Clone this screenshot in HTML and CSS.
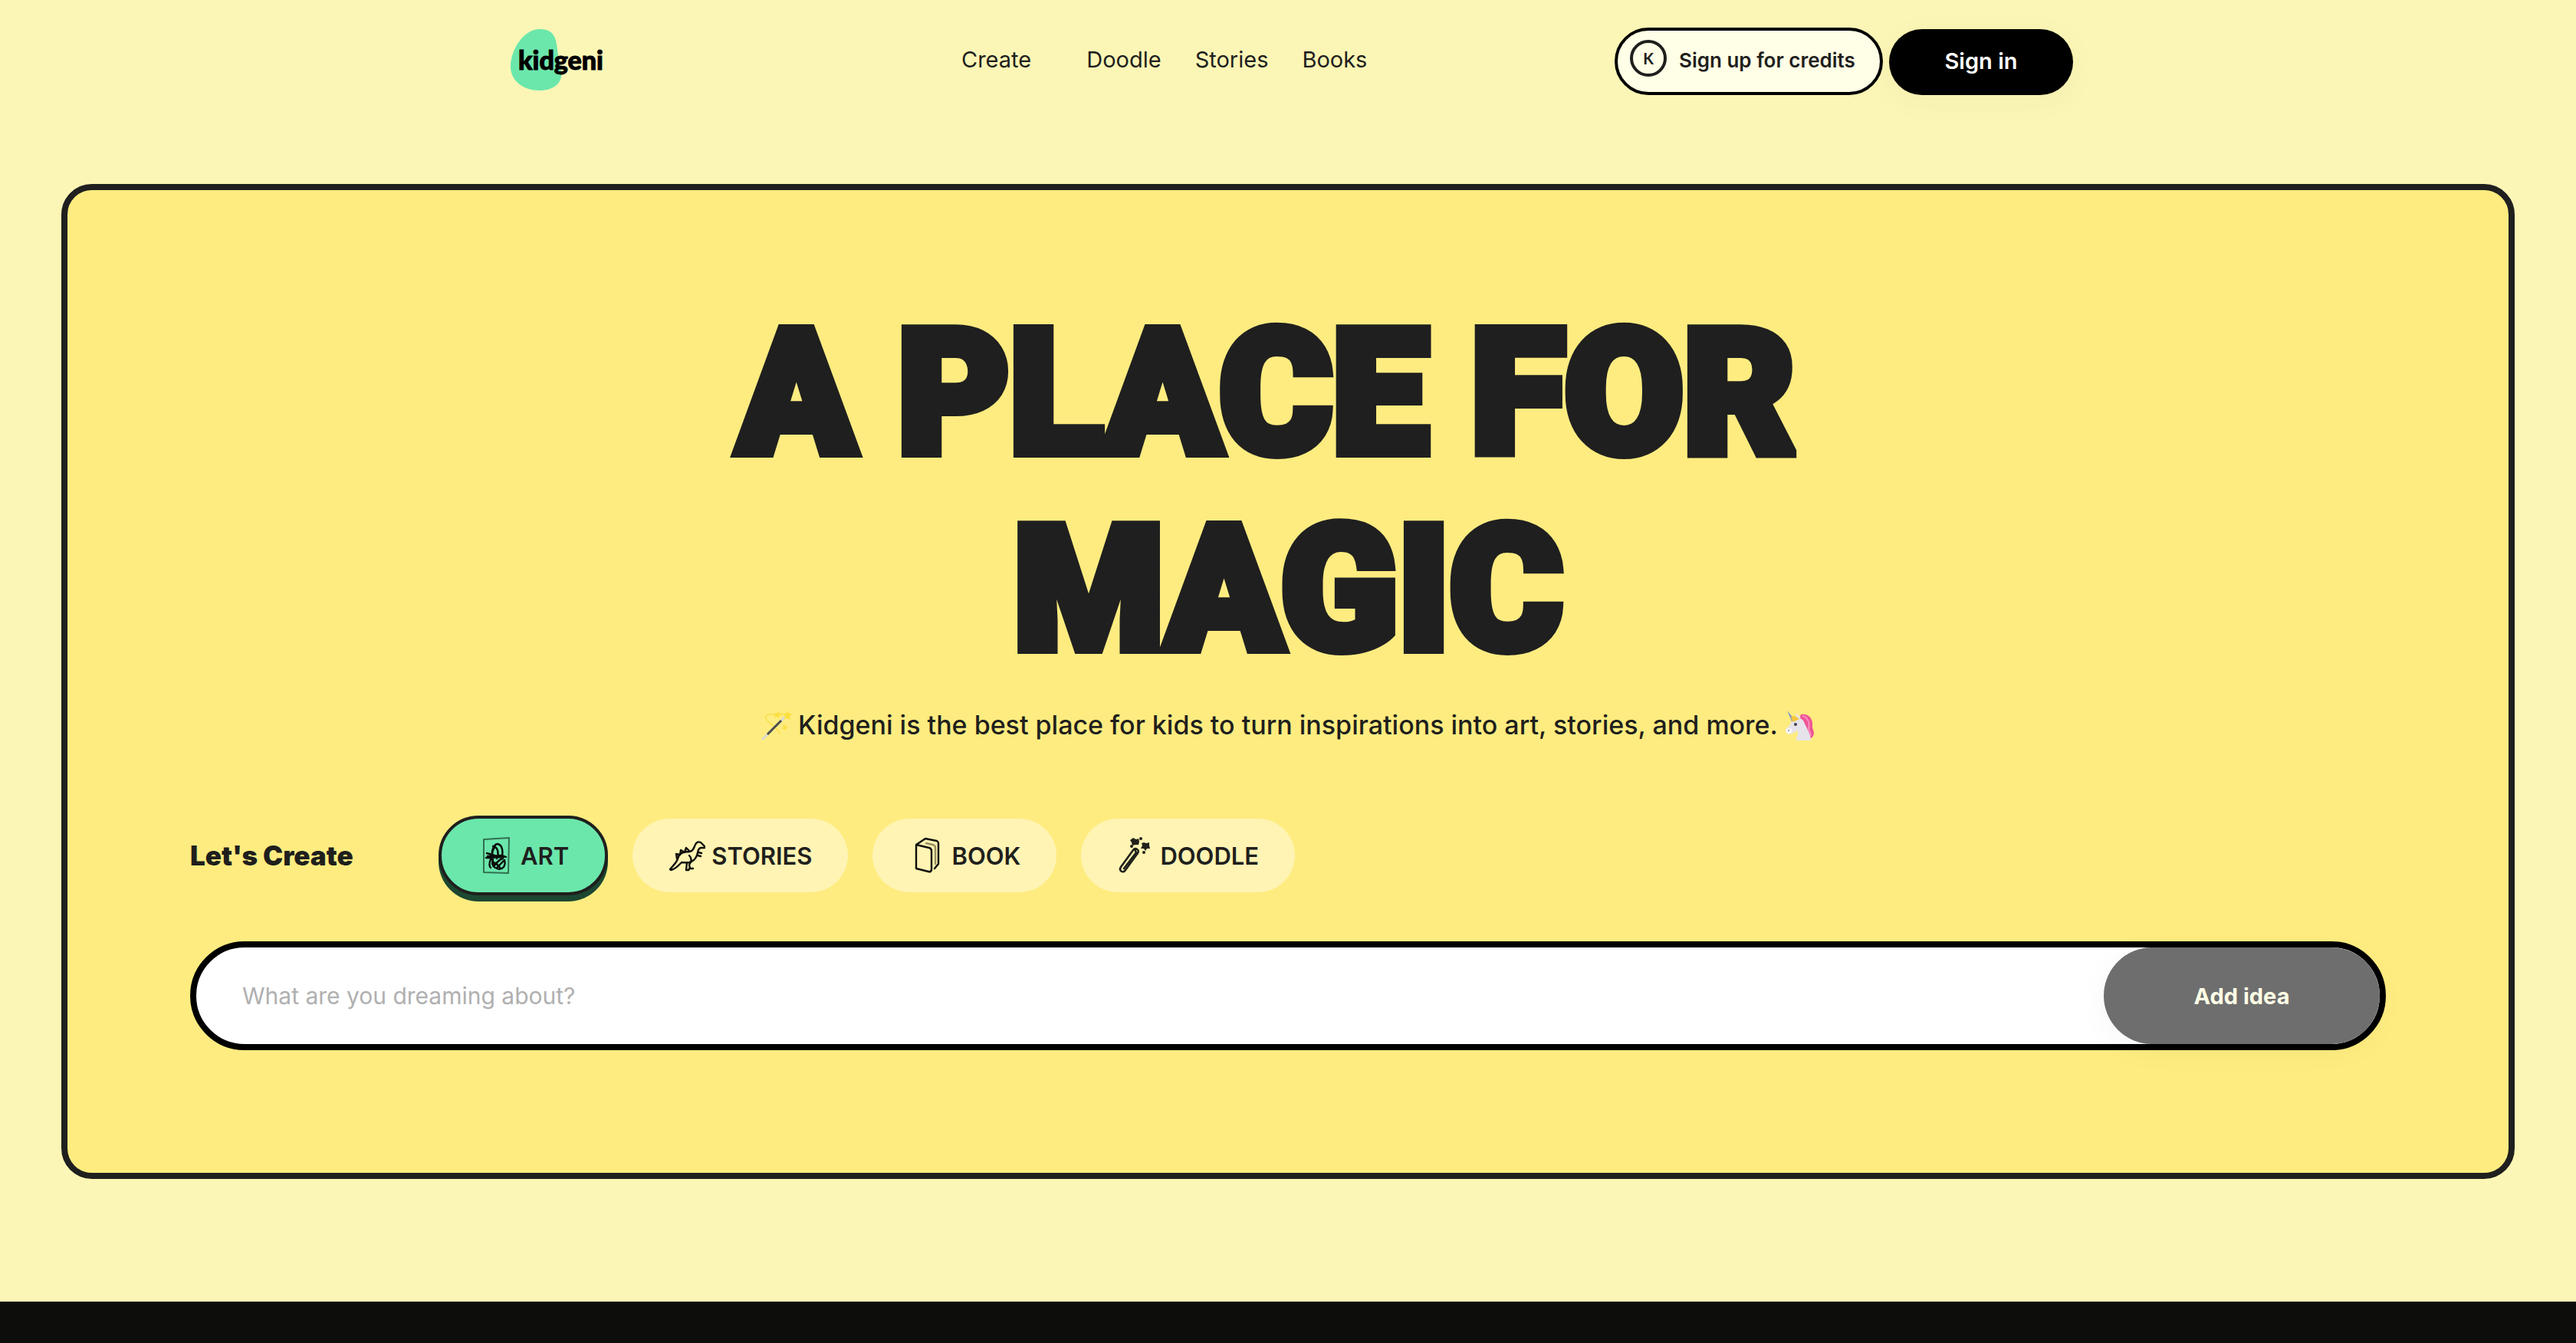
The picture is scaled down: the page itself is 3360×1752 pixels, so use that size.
FILE: index.html
```html
<!DOCTYPE html>
<html lang="en">
<head>
  <meta charset="utf-8" />
  <title>Kidgeni</title>
  <link rel="stylesheet" href="styles.css">
</head>
<body>
  <header class="site-header">
    <a class="logo" href="#">
      <svg class="logo-blob" viewBox="0 0 66 80" aria-hidden="true">
        <path d="M38 0C54 0 59 8 61 26C62 40 67 52 66 62C64 74 52 80 38 80C16 80 0 67 0 49C0 28 16 0 38 0Z" fill="#6be7ac"/>
      </svg>
      <span class="logo-text">kidgeni</span>
    </a>

    <nav class="site-nav">
      <a class="wide" href="#">Create</a>
      <a href="#">Doodle</a>
      <a href="#">Stories</a>
      <a href="#">Books</a>
    </nav>

    <div class="account">
      <button class="btn-credits" type="button">
        <span class="coin">K</span>
        Sign up for credits
      </button>
      <button class="btn-signin" type="button">Sign in</button>
    </div>
  </header>

  <main>
    <section class="hero">
      <h1>A PLACE FOR&nbsp;<br>MAGIC</h1>
      <p class="tagline">
        <svg class="emoji" viewBox="0 0 40 40" aria-hidden="true">
          <path d="M17 6C9 5 4 7 6 11C9 18 20 21 25 32M23 5L34 6" fill="none" stroke="#fbdc3c" stroke-width="1.5" opacity=".8"/>
          <path d="M2 38L30 10" stroke="#d9d8d0" stroke-width="3" stroke-linecap="round"/>
          <path d="M8 32L26 14" stroke="#4c4d49" stroke-width="3"/>
          <path d="M34 1L36 5L40 5L37 9L38 13L34 11L30 12L31 8L28 5L32 5Z" fill="#fbdf3d"/>
          <path d="M22 2L23 5L26 6L23 8L23 11L20 9L17 10L18 7L16 4L20 5Z" fill="#fbdf3d"/>
          <path d="M31 20L32 22L35 23L32 24L32 27L30 25L27 25L29 23L28 20Z" fill="#fbdf3d"/>
        </svg>
        Kidgeni is the best place for kids to turn inspirations into art, stories, and more.
        <svg class="emoji" viewBox="0 0 40 40" aria-hidden="true">
          <path d="M22 6C32 4 38 12 37 20C36 26 41 28 38 34C36 38 30 39 27 37C32 30 27 22 20 12Z" fill="#ef5595"/>
          <path d="M24 8C31 10 34 17 32 24C32 28 36 30 34 35" fill="none" stroke="#f98fc0" stroke-width="2"/>
          <path d="M12 14C17 9 25 10 27 18C30 25 34 30 35 40H16C16 34 20 31 17 27C14 29 10 33 5 31C1 29 2 25 5 23C8 20 8 17 12 14Z" fill="#e6e3ea"/>
          <path d="M5 23C2 25 1 29 5 31C9 32 11 29 11 26Z" fill="#f8f6fa"/>
          <path d="M4 1L14 13L10 15Z" fill="#8198c5"/>
          <path d="M15 12L16 4L22 11Z" fill="#e6e3ea"/>
          <path d="M9 10C12 6 15 8 20 12L12 16Z" fill="#f7c63f"/>
          <circle cx="15" cy="19" r="2" fill="#40414b"/>
          <circle cx="6" cy="27" r="1" fill="#8a8790"/>
        </svg>
      </p>

      <div class="create-row">
        <h2>Let's Create</h2>
        <div class="tabs">
          <button class="tab active" type="button">
            <svg viewBox="0 0 48 48" fill="none" stroke="#0b0d0b" stroke-linecap="round" stroke-linejoin="round" aria-hidden="true">
              <path d="M8 3L41 1L40 47L8 46Z" stroke="#31704f" stroke-width="2"/>
              <path d="M19 25C18 16 22 9 26 9C32 10 33 18 32 26M20 12C27 13 28 22 25 28M23 11C18 19 17 28 22 36M12 21L22 24M11 27L34 26M13 25L30 24M17 29C15 34 15 38 17 40M20 29C18 35 19 38 23 40M25 41C33 44 37 37 35 30M22 37C25 33 29 29 33 28M25 40C28 37 31 34 34 31M32 24L37 26M20 33C24 33 27 37 30 41" stroke-width="2.4"/>
            </svg>
            ART
          </button>
          <button class="tab" type="button">
            <svg viewBox="0 0 48 48" fill="none" stroke="#0d0d0b" stroke-width="2.4" stroke-linecap="round" stroke-linejoin="round" aria-hidden="true">
              <path d="M47 12L42 7C38 5 35 8 34 12C32 18 29 20 23 19C17 20 13 23 12 28C11 33 6 37 2 42L3 43C9 42 13 37 17 33C21 33 25 34 27 33C31 32 34 30 36 26C39 22 37 15 42 14H47"/>
              <path d="M11 28L10 22L15 23L16 17L21 20L23 14L27 18M39 20L43 21M38 24L42 25M27 24C31 28 30 32 27 36L28 41H32M24 33L23 43H26L28 40"/>
            </svg>
            STORIES
          </button>
          <button class="tab" type="button">
            <svg viewBox="0 0 48 48" fill="none" stroke="#0d0d0b" stroke-width="2.4" stroke-linecap="round" stroke-linejoin="round" aria-hidden="true">
              <path d="M10 10L27 14Q30 15 30 18V43Q29 46 26 45L10 41ZM10 10L22 2L37 5Q39 6 39 8V35L34 41"/>
              <path d="M23 8L32 10Q35 11 35 14V35" stroke="#96905f"/>
            </svg>
            BOOK
          </button>
          <button class="tab" type="button">
            <svg viewBox="0 0 48 48" fill="none" stroke="#22221c" stroke-width="2.6" stroke-linecap="round" stroke-linejoin="round" aria-hidden="true">
              <path d="M5 39L21 17C24 13 30 17 27 21L11 43C8 48 2 44 5 39ZM9 41L25 20L23 16"/>
              <g fill="#22221c" stroke="none">
                <path d="M21 1L25 3L28 2L29 6L28 10L24 10L20 11L19 7L17 4Z"/>
                <path d="M35 7L38 8L42 7L42 11L43 15L39 15L37 18L35 15L31 15L33 11L32 8Z"/>
                <circle cx="31" cy="2" r="2"/>
                <circle cx="19" cy="12" r="2"/>
                <circle cx="35" cy="20" r="2"/>
              </g>
            </svg>
            DOODLE
          </button>
        </div>
      </div>

      <form class="idea-form">
        <input type="text" aria-label="Your idea" placeholder="What are you dreaming about?">
        <button type="button">Add idea</button>
      </form>
    </section>
  </main>

  <footer></footer>
</body>
</html>
```
FILE: styles.css
```css
* {
  box-sizing: border-box;
}

body {
  margin: 0;
  min-height: 100vh;
  display: flex;
  flex-direction: column;
  background: #fcf6b6;
  color: #1f1f1d;
  font-family: Inter, "Liberation Sans", sans-serif;
}

button {
  border: none;
  color: inherit;
  font-family: inherit;
  cursor: pointer;
}

/* Header */
.site-header {
  display: flex;
  justify-content: space-between;
  align-items: flex-start;
  width: 100%;
  max-width: 2048px;
  height: 160px;
  margin: 0 auto;
  padding-top: 36px;
}

.logo {
  position: relative;
  width: 272px;
  padding: 2px 0 0 10px;
  color: #000;
  text-decoration: none;
}

.logo-blob {
  display: block;
  width: 66px;
  height: 80px;
}

.logo-text {
  position: absolute;
  top: 20px;
  left: 20px;
  font: 900 34px/44px Lato, sans-serif;
  -webkit-text-stroke: 1px #000;
}

.site-nav {
  display: flex;
  gap: 44px;
  width: 526px;
}

.site-nav a {
  color: #1f1f1d;
  font-size: 29px;
  line-height: 84px;
  text-decoration: none;
}

.site-nav .wide {
  margin-right: 28px;
}

.account {
  display: flex;
  align-items: flex-end;
  gap: 8px;
}

.btn-credits {
  display: flex;
  align-items: center;
  width: 350px;
  height: 88px;
  padding: 0 16px 4px;
  gap: 16px;
  border: 4px solid #000;
  border-radius: 44px;
  background: #fffee6;
  font-size: 26px;
  font-weight: 600;
  white-space: nowrap;
}

.coin {
  width: 48px;
  height: 48px;
  margin-bottom: 4px;
  border: 4px solid #1f1f1d;
  border-radius: 50%;
  font: 700 20px/40px Lato, sans-serif;
  text-align: center;
}

.btn-signin {
  width: 240px;
  height: 86px;
  padding-bottom: 4px;
  border-radius: 43px;
  background: #000;
  color: #fff;
  font-size: 29px;
  font-weight: 600;
  box-shadow: 0 8px 40px rgba(0, 0, 0, 0.04);
}

/* Hero */
main {
  padding: 80px 80px 160px;
}

.hero {
  padding: 138px 160px 160px;
  border: 8px solid #1f1f1f;
  border-radius: 40px;
  background: #feec80;
}

h1 {
  margin: 0;
  color: #1f1f1f;
  font: 900 224px/256px Roboto, sans-serif;
  text-align: center;
  -webkit-text-stroke: 14px #1f1f1f;
}

.tagline {
  display: flex;
  justify-content: center;
  align-items: center;
  gap: 8px;
  margin: 24px 0 94px;
  font-size: 34px;
  font-weight: 500;
  line-height: 48px;
}

.emoji {
  width: 40px;
  height: 40px;
}

.create-row {
  display: flex;
  align-items: center;
}

h2 {
  width: 324px;
  margin: 0;
  font-size: 35px;
  font-weight: 900;
}

.tabs {
  display: flex;
  align-items: center;
  gap: 32px;
}

.tab {
  display: flex;
  align-items: center;
  gap: 8px;
  height: 96px;
  padding: 0 47px;
  border-radius: 52px;
  background: #fff4b3;
  font-size: 31px;
  font-weight: 600;
}

.tab svg {
  width: 48px;
  height: 48px;
}

.tab.active {
  height: 104px;
  border: 4px solid #1f1f1d;
  background: #6be7ac;
  box-shadow: 0 8px 0 #1c4730;
}

.idea-form {
  display: flex;
  height: 142px;
  margin-top: 60px;
  border: 8px solid #000;
  border-radius: 71px;
  background: #fff;
}

.idea-form input {
  flex: 1;
  padding: 0 60px;
  border: none;
  border-radius: 63px;
  outline: none;
  background: transparent;
  font: 400 30px Inter, sans-serif;
}

.idea-form input::placeholder {
  color: #b0b0b0;
}

.idea-form button {
  width: 360px;
  border-radius: 63px;
  background: #6e6e6e;
  color: #fffee6;
  font-size: 29px;
  font-weight: 700;
  box-shadow: 0 8px 40px rgba(0, 0, 0, 0.04);
}

footer {
  flex: 1;
  min-height: 56px;
  background: #0d0e0c;
}
```
